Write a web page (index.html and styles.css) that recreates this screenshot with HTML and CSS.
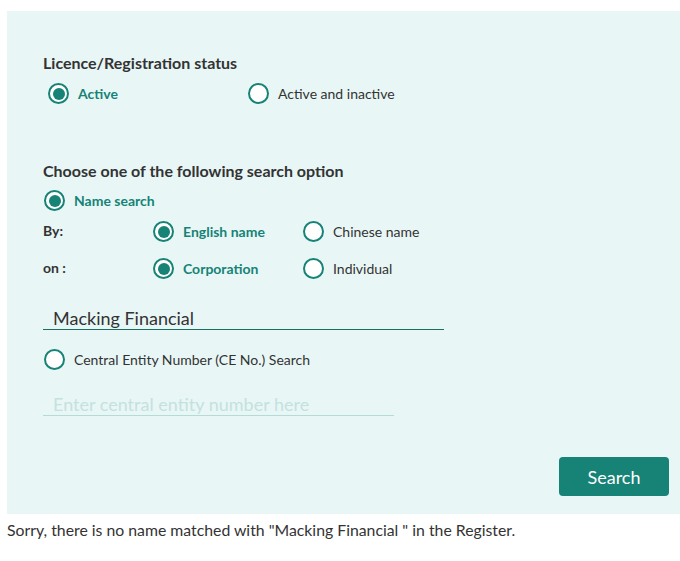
FILE: index.html
```html
<!DOCTYPE html>
<html lang="en">
<head>
    <meta charset="UTF-8">
    <title>Register Search</title>
    <link rel="stylesheet" href="styles.css">
</head>
<body>
    <div class="page">
        <div class="panel">
            <div class="section status">
                <h3>Licence/Registration status</h3>
                <div class="row status-row">
                    <label class="option wide checked"><span class="radio"></span>Active</label>
                    <label class="option"><span class="radio"></span>Active and inactive</label>
                </div>
            </div>

            <div class="section options">
                <h3>Choose one of the following search option</h3>
                <label class="option main checked"><span class="radio"></span>Name search</label>
                <div class="row sub-row by-row">
                    <span class="sub-label">By:</span>
                    <label class="option col checked"><span class="radio"></span>English name</label>
                    <label class="option"><span class="radio"></span>Chinese name</label>
                </div>
                <div class="row sub-row on-row">
                    <span class="sub-label">on :</span>
                    <label class="option col checked"><span class="radio"></span>Corporation</label>
                    <label class="option"><span class="radio"></span>Individual</label>
                </div>
                <input type="text" class="name-input" value="Macking Financial">
                <label class="option main ce"><span class="radio"></span>Central Entity Number (CE No.) Search</label>
                <input type="text" class="ce-input" placeholder="Enter central entity number here">
            </div>

            <div class="actions">
                <button class="search-btn">Search</button>
            </div>
        </div>
        <p class="message">Sorry, there is no name matched with "Macking Financial " in the Register.</p>
    </div>
</body>
</html>
```

FILE: styles.css
```css
body {
    margin: 0;
    padding: 0;
    font-family: Lato, "Open Sans", sans-serif;
    color: #333;
    background-color: #fff;
}
.page {
    padding: 11px 0 0 7px;
}
.panel {
    background-color: #e8f7f6;
    padding: 43px 0 18px 36px;
}
h3 {
    margin: 0;
    font-size: 16px;
    font-weight: bold;
    color: #333;
    line-height: 18px;
}
.row {
    display: flex;
    align-items: center;
}
.option {
    display: flex;
    align-items: center;
    font-size: 14px;
    color: #333;
    line-height: 20px;
}
.option.checked {
    color: #178276;
    font-weight: bold;
}
.radio {
    box-sizing: border-box;
    width: 21px;
    height: 21px;
    border: 2px solid #178276;
    border-radius: 50%;
    background-color: #fff;
    margin-right: 9px;
    position: relative;
    flex-shrink: 0;
}
.checked .radio::after {
    content: "";
    position: absolute;
    left: 2.5px;
    top: 2.5px;
    width: 12px;
    height: 12px;
    border-radius: 50%;
    background-color: #178276;
}
.status-row {
    margin: 11px 0 0 5px;
}
.option.wide {
    width: 200px;
}
.options {
    margin-top: 58px;
}
.option.main {
    margin: 10px 0 0 1px;
}
.sub-row {
    margin-top: 10px;
}
.on-row {
    margin-top: 16px;
}
.sub-label {
    width: 110px;
    font-size: 14px;
    font-weight: bold;
    color: #333;
    position: relative;
    top: -1px;
}
.option.col {
    width: 150px;
}
input {
    display: block;
    background: transparent;
    border: none;
    outline: none;
    font-family: Lato, "Open Sans", sans-serif;
    font-size: 18px;
    padding: 0 0 0 10px;
    box-sizing: border-box;
    height: 23px;
}
.name-input {
    width: 401px;
    margin-top: 28px;
    color: #333;
    border-bottom: 1px solid #1a6e63;
}
.option.ce {
    margin-top: 19px;
}
.ce-input {
    width: 351px;
    margin-top: 23px;
    border-bottom: 1px solid #b3dcd8;
}
.ce-input::placeholder {
    color: #c5e1de;
}
.actions {
    display: flex;
    justify-content: flex-end;
    margin-top: 41px;
    padding-right: 11px;
}
.search-btn {
    width: 110px;
    height: 39px;
    background-color: #178276;
    color: #fff;
    border: none;
    border-radius: 4px;
    font-family: Lato, "Open Sans", sans-serif;
    font-size: 18px;
}
.message {
    margin: 6px 0 0 0;
    font-size: 15.8px;
    color: #333;
}
```
